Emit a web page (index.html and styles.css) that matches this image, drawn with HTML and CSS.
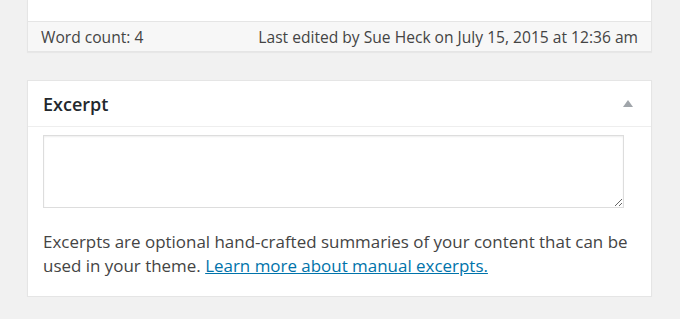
FILE: index.html
```html
<!DOCTYPE html>
<html>
<head>
<meta charset="utf-8">
<link rel="stylesheet" href="styles.css">
</head>
<body>
<div class="page">
  <div class="editor-box">
    <div class="editor-area"></div>
    <div class="status-bar">
      <span class="word-count">Word count: 4</span>
      <span class="last-edit">Last edited by Sue Heck on July 15, 2015 at 12:36 am</span>
    </div>
  </div>
  <div class="postbox">
    <div class="postbox-header">
      <h2 class="postbox-title">Excerpt</h2>
      <svg class="toggle" width="10" height="7" viewBox="0 0 10 7"><path d="M5 0 L10 7 L0 7 Z" fill="#a0a5aa"/></svg>
    </div>
    <div class="postbox-inside">
      <textarea class="excerpt-input"></textarea>
      <p class="excerpt-help">Excerpts are optional hand-crafted summaries of your content that can be used in your theme. <a href="#" class="excerpt-link">Learn more about manual excerpts.</a></p>
    </div>
  </div>
</div>
</body>
</html>
```

FILE: styles.css
```css
html, body {
  margin: 0;
  padding: 0;
  background: #f1f1f1;
}
body {
  font-family: "Open Sans", "Liberation Sans", sans-serif;
  color: #444;
}
.page {
  padding-left: 27px;
  width: 625px;
}
.editor-box {
  background: #fff;
  border: 1px solid #e5e5e5;
  border-top: none;
  box-shadow: 0 1px 1px rgba(0,0,0,0.04);
}
.editor-area {
  height: 21px;
}
.status-bar {
  display: flex;
  justify-content: space-between;
  align-items: center;
  height: 29px;
  padding: 0 13px;
  background: #f7f7f7;
  border-top: 1px solid #e5e5e5;
  font-size: 15.6px;
  color: #444;
  white-space: nowrap;
}
.postbox {
  margin-top: 28px;
  background: #fff;
  border: 1px solid #e5e5e5;
  box-shadow: 0 1px 1px rgba(0,0,0,0.04);
}
.postbox-header {
  display: flex;
  align-items: center;
  justify-content: space-between;
  height: 45px;
  padding: 0 18px 0 15px;
  border-bottom: 1px solid #eee;
}
.postbox-title {
  margin: 0;
  font-size: 18px;
  font-weight: 600;
  color: #23282d;
}
.toggle {
  display: block;
}
.postbox-inside {
  padding: 8px 8px 18px 15px;
}
.excerpt-input {
  display: block;
  box-sizing: border-box;
  width: 581px;
  height: 73px;
  margin: 0;
  border: 1px solid #ddd;
  box-shadow: inset 0 1px 2px rgba(0,0,0,0.07);
  resize: vertical;
  font-family: inherit;
}
.excerpt-help {
  margin: 22px 0 0;
  font-size: 16.95px;
  line-height: 24px;
  color: #444;
}
.excerpt-link {
  color: #0073aa;
  text-decoration: underline;
}
```
